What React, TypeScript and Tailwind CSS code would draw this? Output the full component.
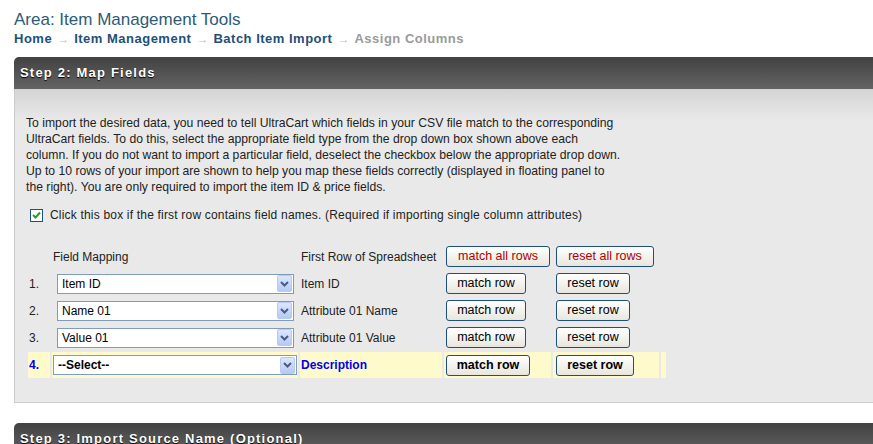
import React from 'react';

const rows = [
    { n: '1.', field: 'Item ID', first: 'Item ID' },
    { n: '2.', field: 'Name 01', first: 'Attribute 01 Name' },
    { n: '3.', field: 'Value 01', first: 'Attribute 01 Value' },
];

const crumbs = ['Home', 'Item Management', 'Batch Item Import'];

const Arrow = () => (
    <span className="inline-flex h-[17px] w-[15px] items-center justify-center rounded-[2px] border border-[#b8c9f2] bg-gradient-to-b from-[#dce6fe] to-[#b6c8f6]">
        <svg width="9" height="6" viewBox="0 0 9 6">
            <path d="M1 1 L4.5 4.5 L8 1" fill="none" stroke="#4a5d80" strokeWidth="2" />
        </svg>
    </span>
);

const Select = ({ value, bold, className }: { value: string; bold?: boolean; className: string }) => (
    <div className={`flex h-[20px] items-center justify-between border border-[#7f9db9] bg-white pl-[4px] pr-[1px] ${className}`}>
        <span className={bold ? 'font-bold text-black' : 'text-black'}>{value}</span>
        <Arrow />
    </div>
);

const Btn = ({ label, w, red, bold }: { label: string; w: string; red?: boolean; bold?: boolean }) => (
    <button
        className={`h-[21px] rounded-[3px] border border-[#1f4f7f] bg-gradient-to-b from-white to-[#e8e6dc] text-[12.5px] leading-none ${w} ${red ? 'text-[#b00000]' : 'text-black'} ${bold ? 'font-bold' : ''}`}
    >
        {label}
    </button>
);

const Header = ({ title }: { title: string }) => (
    <div className="flex h-[32px] items-center rounded-tl-[5px] bg-gradient-to-b from-[#424242] to-[#646464] pl-[6px] text-[13px] font-bold tracking-[1.2px] text-white [text-shadow:0_1px_1px_#000]">
        {title}
    </div>
);

const App: React.FC = () => {
    return (
        <div className="h-[444px] w-[873px] overflow-hidden bg-white font-['Liberation_Sans',Arial,sans-serif]">
            <div className="pl-[14px] pt-[11px]">
                <div className="text-[17px] leading-[18px] text-[#2d5b76]">Area: Item Management Tools</div>
                <div className="mt-[2px] flex items-center text-[13px] font-bold leading-[16px] tracking-[0.5px]">
                    {crumbs.map(c => (
                        <React.Fragment key={c}>
                            <span className="text-[#1f4f78]">{c}</span>
                            <span className="mx-[5px] text-[12px] font-normal tracking-normal text-[#c4c4c4]">→</span>
                        </React.Fragment>
                    ))}
                    <span className="text-[#9a9a9a]">Assign Columns</span>
                </div>
            </div>

            <div className="ml-[14px] mt-[10px]">
                <Header title="Step 2: Map Fields" />
                <div className="border-b border-l border-[#cccccc] bg-[linear-gradient(#d4d4d4,#e9e9e9_32px)] pb-[22px] pl-[11px] pt-[26px] text-[12px] text-[#222]">
                    <p className="text-[12.2px] leading-[16px]">
                        To import the desired data, you need to tell UltraCart which fields in your CSV file match to the corresponding<br />
                        UltraCart fields. To do this, select the appropriate field type from the drop down box shown above each<br />
                        column. If you do not want to import a particular field, deselect the checkbox below the appropriate drop down.<br />
                        Up to 10 rows of your import are shown to help you map these fields correctly (displayed in floating panel to<br />
                        the right). You are only required to import the item ID &amp; price fields.
                    </p>

                    <div className="mt-[12px] flex h-[16px] items-center">
                        <span className="ml-[4px] flex h-[13px] w-[13px] items-center justify-center border border-[#1c5180] bg-white">
                            <svg width="9" height="8" viewBox="0 0 9 8">
                                <path d="M1 4 L3.5 6.5 L8 1.5" fill="none" stroke="#21a321" strokeWidth="2" />
                            </svg>
                        </span>
                        <span className="ml-[7px] tracking-[0.19px]">Click this box if the first row contains field names. (Required if importing single column attributes)</span>
                    </div>

                    <table className="mt-[19px] border-separate border-spacing-[2px]">
                        <tbody>
                            <tr className="h-[25px]">
                                <td className="w-[22px]" />
                                <td className="w-[246px] pl-[1px]">Field Mapping</td>
                                <td className="w-[142px] pl-[1px]">First Row of Spreadsheet</td>
                                <td className="w-[107px] pl-[2px]"><Btn label="match all rows" w="w-[104px]" red /></td>
                                <td className="w-[106px] pl-[3px]"><Btn label="reset all rows" w="w-[98px]" red /></td>
                                <td className="w-[5px]" />
                            </tr>
                            {rows.map(r => (
                                <tr key={r.n} className="h-[25px]">
                                    <td className="pl-[1px]">{r.n}</td>
                                    <td className="pl-[5px]"><Select value={r.field} className="w-[237px]" /></td>
                                    <td className="pl-[1px]">{r.first}</td>
                                    <td className="pl-[2px]"><Btn label="match row" w="w-[80px]" /></td>
                                    <td className="pl-[3px]"><Btn label="reset row" w="w-[74px]" /></td>
                                    <td />
                                </tr>
                            ))}
                            <tr className="h-[26px] font-bold text-[#0000f0]">
                                <td className="bg-[#fffacc] pl-[1px]">4.</td>
                                <td className="bg-[#fffacc] pl-[1px]"><Select value="--Select--" bold className="w-[244px]" /></td>
                                <td className="bg-[#fffacc] pl-[1px]">Description</td>
                                <td className="bg-[#fffacc] pl-[2px]"><Btn label="match row" w="w-[84px]" bold /></td>
                                <td className="bg-[#fffacc] pl-[3px]"><Btn label="reset row" w="w-[78px]" bold /></td>
                                <td className="bg-[#fffacc]" />
                            </tr>
                        </tbody>
                    </table>
                </div>

                <div className="mt-[20px]">
                    <Header title="Step 3: Import Source Name (Optional)" />
                </div>
            </div>
        </div>
    );
};

export default App;
